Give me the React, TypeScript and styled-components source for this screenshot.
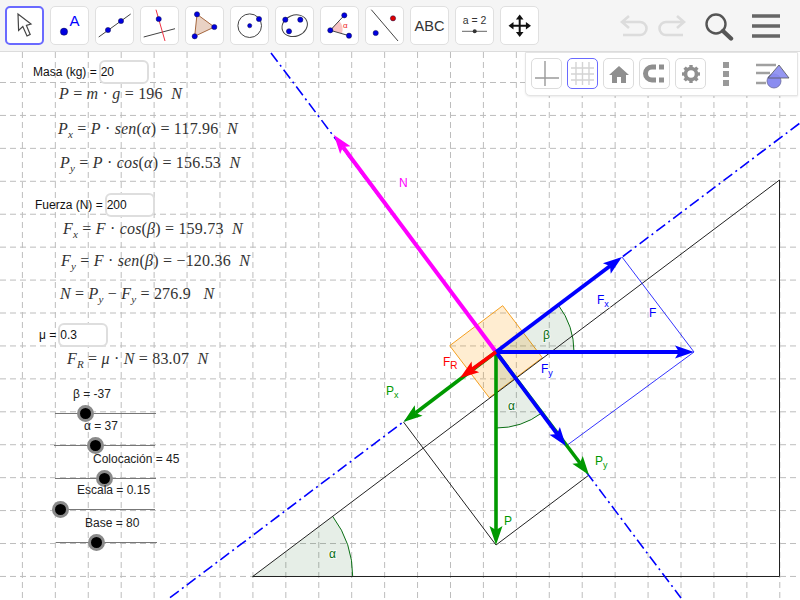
import * as React from 'react';
import styled, { createGlobalStyle } from 'styled-components';

const GRID_STEP = 32.93;
const TOP = 52;

const GlobalStyle = createGlobalStyle`
    html, body {
        margin: 0;
        height: 100%;
        overflow: hidden;
        background: #fff;
        font-family: "Liberation Sans", Arial, sans-serif;
    }
    #root {
        height: 100%;
    }
`;

const Page = styled.div`
    display: flex;
    flex-direction: column;
    width: 800px;
    height: 600px;
`;

const Toolbar = styled.div`
    display: flex;
    align-items: flex-start;
    gap: 6px;
    height: 52px;
    box-sizing: border-box;
    padding: 6px 5px 0;
    background: #f5f5f5;
    border-bottom: 1px solid #dcdcdc;
`;

const ToolButton = styled.div<{ $active?: boolean }>`
    width: 39px;
    height: 39px;
    box-sizing: border-box;
    flex: none;
    background: #fff;
    border-radius: 5px;
    border: ${(p) => (p.$active ? '2px solid #6a6aff' : '1px solid #e0e0e0')};
    display: flex;
    align-items: center;
    justify-content: center;
    svg {
        display: block;
        flex: none;
    }
`;

const RightTools = styled.div`
    margin-left: auto;
    display: flex;
    align-items: flex-start;
    padding: 7px 15px 0 0;
`;

const ActionIcon = styled.svg<{ $gap: number }>`
    display: block;
    margin-left: ${(p) => p.$gap}px;
`;

const Canvas = styled.div`
    position: relative;
    flex: 1;
    background: #fff;
    overflow: hidden;
`;

const Drawing = styled.svg`
    position: absolute;
    left: 0;
    top: 0;
`;

const StylePanel = styled.div`
    position: absolute;
    top: 0;
    left: 525px;
    width: 273px;
    height: 44px;
    box-sizing: border-box;
    padding: 5px;
    display: flex;
    gap: 5px;
    background: #fff;
    border: 1px solid #e4e4e4;
    border-radius: 0 0 0 5px;
    box-shadow: 0 1px 2px rgba(0, 0, 0, 0.08);
`;

const StyleButton = styled.div<{ $active?: boolean }>`
    width: 31px;
    height: 31px;
    box-sizing: border-box;
    flex: none;
    border-radius: 5px;
    border: 1px solid ${(p) => (p.$active ? '#6a6aff' : '#dcdcdc')};
    display: flex;
    align-items: center;
    justify-content: center;
`;

const MoreDots = styled.div`
    width: 6px;
    height: 24px;
    margin: 4px 0 0 12px;
    flex: none;
    display: flex;
    flex-direction: column;
    justify-content: space-between;
    i {
        display: block;
        height: 6px;
        background: #999;
    }
`;

const StyleBarIcon = styled.svg`
    display: block;
    flex: none;
    margin: 3px 0 0 22px;
`;

const Field = styled.label<{ $x: number; $y: number }>`
    position: absolute;
    left: ${(p) => p.$x}px;
    top: ${(p) => p.$y - TOP}px;
    display: flex;
    align-items: center;
    height: 24px;
    font-size: 12px;
    color: #111;
    white-space: pre;
`;

const FieldInput = styled.input`
    width: 50px;
    height: 24px;
    box-sizing: border-box;
    margin-left: 2px;
    padding: 0;
    border: 2px solid #dedede;
    border-radius: 6px;
    background: #fff;
    font: 12px "Liberation Sans", Arial, sans-serif;
    color: #111;
    outline: none;
`;

const Formula = styled.div<{ $x: number; $y: number }>`
    position: absolute;
    left: ${(p) => p.$x}px;
    top: ${(p) => p.$y - TOP - 10}px;
    height: 22px;
    line-height: 22px;
    font-family: "Liberation Serif", "Times New Roman", serif;
    font-size: 16px;
    letter-spacing: 0.2px;
    color: #333;
    white-space: pre;
    i {
        font-style: italic;
    }
    sub {
        font-size: 11px;
        font-style: italic;
        line-height: 0;
    }
`;

const SliderLabel = styled.div<{ $x: number; $y: number }>`
    position: absolute;
    left: ${(p) => p.$x}px;
    top: ${(p) => p.$y - TOP - 8}px;
    height: 16px;
    line-height: 16px;
    font-size: 12px;
    color: #222;
    white-space: pre;
`;

const SliderTrack = styled.div<{ $x: number; $y: number }>`
    position: absolute;
    left: ${(p) => p.$x}px;
    top: ${(p) => p.$y - TOP}px;
    width: 101px;
    height: 1px;
    background: #777;
`;

const SliderKnob = styled.div<{ $pos: number }>`
    position: absolute;
    left: ${(p) => p.$pos - 8}px;
    top: -8px;
    width: 11px;
    height: 11px;
    border-radius: 50%;
    background: #000;
    border: 3px solid #8a8a8a;
`;

const GUIDE = '#bdbdbd';

const Dot = ({ x, y, fill = '#0000e0', r = 2.6 }: { x: number; y: number; fill?: string; r?: number }) => (
    <circle cx={x} cy={y} r={r} fill={fill} stroke="#10104a" strokeWidth={0.5} />
);

const Icon: React.FC<{ children: React.ReactNode }> = ({ children }) => (
    <svg width={37} height={37} viewBox="1 1 37 37">
        {children}
    </svg>
);

const tools: React.ReactNode[] = [
    <path d="M13 8 L13.6 24.5 L17.8 20.6 L22 30 L25.2 28.4 L21.4 19.4 L26 18 Z" fill="#fff" stroke="#444" strokeWidth={1.2} />,
    <>
        <circle cx={14} cy={25.7} r={3.6} fill="#0000e0" stroke="#10104a" strokeWidth={0.5} />
        <text x={19.5} y={19.5} fontSize={15} fill="#0000ff" fontFamily="Liberation Sans">A</text>
    </>,
    <>
        <line x1={3.7} y1={31} x2={35.7} y2={8} stroke="#444" strokeWidth={1} />
        <Dot x={13} y={24} />
        <Dot x={26} y={15} />
    </>,
    <>
        <line x1={3.7} y1={31} x2={35} y2={22.7} stroke="#444" strokeWidth={1} />
        <line x1={16} y1={3.7} x2={25} y2={35} stroke="#ee3344" strokeWidth={1} />
        <Dot x={18.7} y={13} />
    </>,
    <>
        <polygon points="12,8.3 29.3,21 9.7,30.3" fill="#e9d2c4" stroke="#a5673f" strokeWidth={1} />
        <Dot x={12} y={8.3} />
        <Dot x={29.3} y={21} />
        <Dot x={9.7} y={30.3} />
    </>,
    <>
        <circle cx={19.7} cy={19.7} r={11.8} fill="none" stroke="#444" strokeWidth={1} />
        <Dot x={19.7} y={19.7} r={2.1} />
        <Dot x={29} y={13} />
    </>,
    <>
        <ellipse cx={19.7} cy={19.7} rx={13} ry={10.5} transform="rotate(-22 19.7 19.7)" fill="none" stroke="#444" strokeWidth={1} />
        <Dot x={10.3} y={13.7} />
        <Dot x={25.3} y={13.7} />
        <Dot x={14} y={25.3} />
    </>,
    <>
        <path d="M10.3 24.3 L19 14.8 A13 13 0 0 1 22 27.4 Z" fill="#f9c4c4" />
        <polyline points="24.3,9.3 10.3,24.3 29,29.7" fill="none" stroke="#444" strokeWidth={1} />
        <Dot x={24.3} y={9.3} />
        <Dot x={10.3} y={24.3} />
        <Dot x={29} y={29.7} />
        <text x={23} y={22} fontSize={8} fill="#ee2222" fontFamily="Liberation Sans">α</text>
    </>,
    <>
        <line x1={6.3} y1={3.7} x2={33} y2={35} stroke="#444" strokeWidth={1} />
        <Dot x={28} y={12.3} fill="#e00000" />
        <Dot x={10.7} y={27} />
    </>,
    <text x={19.5} y={25} textAnchor="middle" fontSize={14.5} fill="#333" fontFamily="Liberation Sans">ABC</text>,
    <>
        <text x={19.5} y={18} textAnchor="middle" fontSize={10.5} fill="#333" fontFamily="Liberation Sans">a = 2</text>
        <line x1={7} y1={25.3} x2={32} y2={25.3} stroke="#666" strokeWidth={1} />
        <circle cx={19.7} cy={25.3} r={2} fill="#333" />
    </>,
    <path
        d="M19.7 8.5 L23.5 13.5 H20.7 V18.7 H25.9 V15.9 L31 19.7 L25.9 23.5 V20.7 H20.7 V25.9 H23.5 L19.7 31 L15.9 25.9 H18.7 V20.7 H13.5 V23.5 L8.5 19.7 L13.5 15.9 V18.7 H18.7 V13.5 H15.9 Z"
        fill="#111"
    />,
];

const fields = [
    { x: 33, y: 60, label: 'Masa (kg) =', value: '20' },
    { x: 35, y: 193, label: 'Fuerza (N) =', value: '200' },
    { x: 39, y: 323, label: 'μ =', value: '0.3' },
];

const formulas: { x: number; y: number; body: React.ReactNode }[] = [
    { x: 59, y: 93, body: <><i>P</i> = <i>m</i> · <i>g</i> = 196  <i>N</i></> },
    { x: 58, y: 128, body: <><i>P<sub>x</sub></i> = <i>P</i> · <i>sen</i>(<i>α</i>) = 117.96  <i>N</i></> },
    { x: 60, y: 162, body: <><i>P<sub>y</sub></i> = <i>P</i> · <i>cos</i>(<i>α</i>) = 156.53  <i>N</i></> },
    { x: 63, y: 228, body: <><i>F<sub>x</sub></i> = <i>F</i> · <i>cos</i>(<i>β</i>) = 159.73  <i>N</i></> },
    { x: 61, y: 260, body: <><i>F<sub>y</sub></i> = <i>F</i> · <i>sen</i>(<i>β</i>) = −120.36  <i>N</i></> },
    { x: 60, y: 293, body: <><i>N</i> = <i>P<sub>y</sub></i> − <i>F<sub>y</sub></i> = 276.9   <i>N</i></> },
    { x: 67, y: 358, body: <><i>F<sub>R</sub></i> = <i>μ</i> · <i>N</i> = 83.07  <i>N</i></> },
];

const sliders = [
    { label: 'β = -37', lx: 73, ly: 394, x: 55, y: 413, knob: 30 },
    { label: 'α = 37', lx: 84, ly: 426, x: 54, y: 445, knob: 41 },
    { label: 'Colocación = 45', lx: 93, ly: 459, x: 55, y: 478, knob: 49 },
    { label: 'Escala = 0.15', lx: 77, ly: 490, x: 54, y: 509, knob: 6 },
    { label: 'Base = 80', lx: 85, ly: 523, x: 56, y: 542, knob: 40 },
];

const vectors = [
    { color: '#ff00ff', x2: 334, y2: 135, w: 4, id: 'n' },
    { color: '#009900', x2: 496, y2: 545, w: 3.6, id: 'p' },
    { color: '#009900', x2: 403.5, y2: 422, w: 3.6, id: 'px' },
    { color: '#009900', x2: 589, y2: 475, w: 3.6, id: 'py' },
    { color: '#0000ff', x2: 622, y2: 257, w: 3.8, id: 'fx' },
    { color: '#0000ff', x2: 694, y2: 352, w: 3.8, id: 'f' },
    { color: '#0000ff', x2: 566, y2: 446, w: 3.8, id: 'fy' },
    { color: '#ff0000', x2: 460, y2: 378, w: 3.6, id: 'fr' },
];

const O = { x: 496, y: 352 };

const Arrow = ({ color, x2, y2, w }: { color: string; x2: number; y2: number; w: number }) => {
    const dx = x2 - O.x;
    const dy = y2 - O.y;
    const len = Math.hypot(dx, dy);
    const ux = dx / len;
    const uy = dy / len;
    const head = 19;
    const bx = x2 - ux * head;
    const by = y2 - uy * head;
    const nx = -uy * 6.5;
    const ny = ux * 6.5;
    const neckX = x2 - ux * (head - 4);
    const neckY = y2 - uy * (head - 4);
    return (
        <>
            <line x1={O.x} y1={O.y} x2={neckX} y2={neckY} stroke={color} strokeWidth={w} />
            <polygon
                points={`${x2},${y2} ${bx + nx},${by + ny} ${neckX},${neckY} ${bx - nx},${by - ny}`}
                fill={color}
            />
        </>
    );
};

const Diagram = () => {
    const vs = Array.from({ length: 24 }, (_, i) => 22.4 + i * GRID_STEP);
    const hs = Array.from({ length: 16 }, (_, i) => 82.5 + i * GRID_STEP);
    return (
        <Drawing width={800} height={548} viewBox={`0 ${TOP} 800 548`} fontFamily="Liberation Sans">
            <g stroke={GUIDE} strokeWidth={1} strokeDasharray="6 4">
                {vs.map((x) => (
                    <line key={x} x1={x} y1={TOP} x2={x} y2={600} />
                ))}
                {hs.map((y) => (
                    <line key={y} x1={0} y1={y} x2={800} y2={y} />
                ))}
            </g>

            <path d="M252.7 576.5 L332.7 516.4 A100 100 0 0 1 352.7 576.5 Z" fill="#0a5c14" fillOpacity={0.1} />
            <path d="M332.7 516.4 A100 100 0 0 1 352.7 576.5" fill="none" stroke="#0a6e14" strokeWidth={1} />
            <line x1={252.7} y1={576.5} x2={352.7} y2={576.5} stroke="#0a6e14" strokeWidth={1} />

            <polygon points="502.7,305.7 449.7,345.7 489.3,397.7 542.3,357.7" fill="#ff9900" fillOpacity={0.18} stroke="#f5a020" strokeWidth={1} />

            <path d="M496 352 L558.3 305 A78 78 0 0 1 574 352 Z" fill="#0a5c14" fillOpacity={0.1} />
            <path d="M558.3 305 A78 78 0 0 1 574 352" fill="none" stroke="#0a6e14" strokeWidth={1} />
            <path d="M496 352 L541.7 413 A76 76 0 0 1 496 428 Z" fill="#0a5c14" fillOpacity={0.1} />
            <path d="M541.7 413 A76 76 0 0 1 496 428" fill="none" stroke="#0a6e14" strokeWidth={1} />

            <polyline points="252.7,576.5 779.5,576.5 779.5,180 252.7,576.5" fill="none" stroke="#222" strokeWidth={1} />
            <polyline points="403.5,422 496,545 589,475" fill="none" stroke="#222" strokeWidth={1} />
            <polyline points="622,257 694,352 566,446" fill="none" stroke="#0000ff" strokeWidth={0.8} />

            <g stroke="#0000ff" strokeWidth={1.6} strokeDasharray="11 4 2 4">
                <line x1={170} y1={597.7} x2={800} y2={123} />
                <line x1={271} y1={53} x2={681} y2={598} />
            </g>

            {vectors.map((v) => (
                <Arrow key={v.id} color={v.color} x2={v.x2} y2={v.y2} w={v.w} />
            ))}

            <g fontSize={12} stroke="#fff" strokeOpacity={0.7} strokeWidth={2} paintOrder="stroke">
                <text x={399} y={187} fill="#ff00ff">N</text>
                <text x={597} y={304} fill="#0000ff">F<tspan fontSize={9} dy={3}>x</tspan></text>
                <text x={649} y={317} fill="#0000ff">F</text>
                <text x={541} y={373} fill="#0000ff">F<tspan fontSize={9} dy={3}>y</tspan></text>
                <text x={543} y={339} fill="#0a6e14">β</text>
                <text x={508} y={410} fill="#0a6e14">α</text>
                <text x={443} y={366} fill="#ff0000">F<tspan fontSize={10} dy={3}>R</tspan></text>
                <text x={386} y={395} fill="#009900">P<tspan fontSize={9} dy={3}>x</tspan></text>
                <text x={595} y={465} fill="#009900">P<tspan fontSize={9} dy={3}>y</tspan></text>
                <text x={504} y={525} fill="#009900">P</text>
                <text x={329} y={558} fill="#0a6e14">α</text>
            </g>
        </Drawing>
    );
};

export default function App() {
    return (
        <Page>
            <GlobalStyle />
            <Toolbar>
                {tools.map((t, i) => (
                    <ToolButton key={i} $active={i === 0}>
                        <Icon>{t}</Icon>
                    </ToolButton>
                ))}
                <RightTools>
                    <ActionIcon $gap={0} width={29} height={24} viewBox="0 0 29 24">
                        <path d="M9 3 L2 9 L9 15 M3 9 H20 A6.5 6.5 0 0 1 20 22 H3" fill="none" stroke="#dcdcdc" strokeWidth={2.6} />
                    </ActionIcon>
                    <ActionIcon $gap={8} width={29} height={24} viewBox="0 0 29 24">
                        <path d="M20 3 L27 9 L20 15 M26 9 H9 A6.5 6.5 0 0 0 9 22 H26" fill="none" stroke="#dcdcdc" strokeWidth={2.6} />
                    </ActionIcon>
                    <ActionIcon $gap={18} width={30} height={30} viewBox="0 0 30 30">
                        <circle cx={12} cy={11} r={9.5} fill="none" stroke="#555" strokeWidth={2.4} />
                        <line x1={19} y1={18} x2={27} y2={25.5} stroke="#555" strokeWidth={4.4} strokeLinecap="round" />
                    </ActionIcon>
                    <ActionIcon $gap={18} width={28} height={26} viewBox="0 0 28 26">
                        <path d="M0 3 H28 M0 13 H28 M0 23 H28" stroke="#666" strokeWidth={3.4} />
                    </ActionIcon>
                </RightTools>
            </Toolbar>
            <Canvas>
                <Diagram />
                {fields.map((f) => (
                    <Field key={f.label} $x={f.x} $y={f.y}>
                        {f.label}
                        <FieldInput value={f.value} readOnly />
                    </Field>
                ))}
                {formulas.map((f) => (
                    <Formula key={f.y} $x={f.x} $y={f.y}>
                        {f.body}
                    </Formula>
                ))}
                {sliders.map((s) => (
                    <React.Fragment key={s.label}>
                        <SliderLabel $x={s.lx} $y={s.ly}>{s.label}</SliderLabel>
                        <SliderTrack $x={s.x} $y={s.y}>
                            <SliderKnob $pos={s.knob} />
                        </SliderTrack>
                    </React.Fragment>
                ))}
                <StylePanel>
                    <StyleButton>
                        <svg width={29} height={29} viewBox="0 0 29 29">
                            <path d="M3 19 H27 M13 2 V27" stroke="#9a9a9a" strokeWidth={1.4} fill="none" />
                        </svg>
                    </StyleButton>
                    <StyleButton $active>
                        <svg width={29} height={29} viewBox="0 0 29 29">
                            <path d="M3 9 H26 M3 15 H26 M3 21 H26 M8 3 V26 M14.5 3 V26 M21 3 V26" stroke="#d4d4d4" strokeWidth={1.4} fill="none" />
                        </svg>
                    </StyleButton>
                    <StyleButton>
                        <svg width={24} height={24} viewBox="0 0 24 24">
                            <path d="M12 4 L22 13 H19 V21 H14 V15 H10 V21 H5 V13 H2 Z" fill="#8f8f8f" />
                        </svg>
                    </StyleButton>
                    <StyleButton>
                        <svg width={27} height={27} viewBox="0 0 27 27">
                            <path d="M15 7 H11 A6.5 6.5 0 0 0 11 20 H15" fill="none" stroke="#8f8f8f" strokeWidth={5} />
                            <path d="M18 7 H23 M18 20 H23" stroke="#8f8f8f" strokeWidth={5} />
                        </svg>
                    </StyleButton>
                    <StyleButton>
                        <svg width={22} height={22} viewBox="0 0 22 22">
                            <circle cx={11} cy={11} r={5.5} fill="none" stroke="#8f8f8f" strokeWidth={3.6} />
                            <g stroke="#8f8f8f" strokeWidth={3.4}>
                                <line x1={11} y1={2} x2={11} y2={5} />
                                <line x1={11} y1={17} x2={11} y2={20} />
                                <line x1={2} y1={11} x2={5} y2={11} />
                                <line x1={17} y1={11} x2={20} y2={11} />
                                <line x1={4.6} y1={4.6} x2={6.8} y2={6.8} />
                                <line x1={15.2} y1={15.2} x2={17.4} y2={17.4} />
                                <line x1={4.6} y1={17.4} x2={6.8} y2={15.2} />
                                <line x1={15.2} y1={6.8} x2={17.4} y2={4.6} />
                            </g>
                        </svg>
                    </StyleButton>
                    <MoreDots>
                        <i />
                        <i />
                        <i />
                    </MoreDots>
                    <StyleBarIcon width={35} height={30} viewBox="0 0 35 30">
                        <path d="M0 4 H20 M0 12 H14 M0 22 H10" stroke="#a0a0a0" strokeWidth={2.4} />
                        <circle cx={18} cy={20} r={7} fill="#8a8cf0" stroke="#6a6a9a" strokeWidth={0.8} />
                        <polygon points="23,4 12,17 33,17" fill="#8a8cf0" fillOpacity={0.9} stroke="#555" strokeWidth={0.8} />
                    </StyleBarIcon>
                </StylePanel>
            </Canvas>
        </Page>
    );
}
